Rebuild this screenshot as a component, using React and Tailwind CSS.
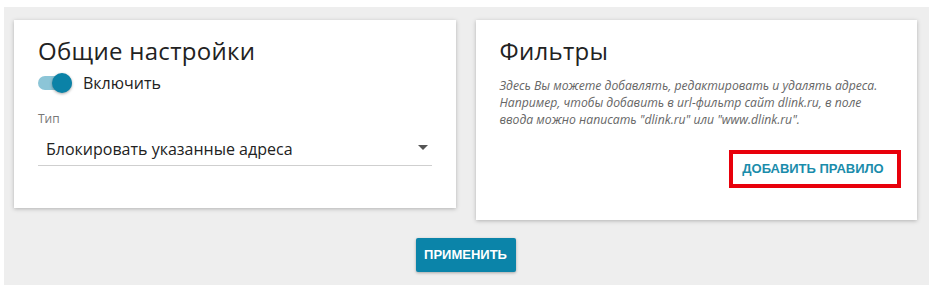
import { useState } from "react";

const App = () => {
  const [enabled, setEnabled] = useState(true);

  return (
    <div className="w-[934px] h-[292px] bg-white pt-[7px] pl-[4px] pr-[5px] pb-[7px] font-['Open_Sans',sans-serif]">
      <div className="h-full bg-[#eeeeee] pt-[13px] pl-[10px] pr-[12px]">
        <div className="flex items-start gap-5">
          {/* Общие настройки */}
          <div className="w-[442px] h-[188px] bg-white shadow-[0_1px_4px_rgba(0,0,0,0.25)] px-6 pt-[15px]">
            <h2 className="text-[24px] leading-[32px] text-[#222] tracking-[0.3px]">Общие настройки</h2>
            <div className="flex items-center mt-[4px] h-[24px]">
              <button
                onClick={() => setEnabled(!enabled)}
                className="relative w-[34px] h-[14px] rounded-full bg-[#8cc5d7]"
              >
                <span className="absolute top-[-3px] left-[14px] w-[20px] h-[20px] rounded-full bg-[#0b82a7] shadow-[0_1px_3px_rgba(0,0,0,0.35)]" />
              </button>
              <span className="ml-[11px] text-[16px] text-[#222]">Включить</span>
            </div>
            <div className="mt-[16px] text-[12px] leading-[16px] text-[#777]">Тип</div>
            <div className="flex items-center justify-between mt-[5px] h-[34px] border-b border-[#cfcfcf] pl-[8px] pr-[4px]">
              <span className="text-[16px] text-[#222]">Блокировать указанные адреса</span>
              <svg width="10" height="5" viewBox="0 0 10 5" className="mb-[2px]">
                <path d="M0 0 L10 0 L5 5 Z" fill="#555" />
              </svg>
            </div>
          </div>

          {/* Фильтры */}
          <div className="w-[442px] h-[200px] bg-white shadow-[0_1px_4px_rgba(0,0,0,0.25)] px-6 pt-[15px] flex flex-col">
            <h2 className="text-[24px] leading-[32px] text-[#222] tracking-[0.3px]">Фильтры</h2>
            <p className="mt-[10px] text-[12.2px] leading-[17px] italic text-[#666]">
              Здесь Вы можете добавлять, редактировать и удалять адреса.
              <br />
              Например, чтобы добавить в url-фильтр сайт dlink.ru, в поле
              <br />
              ввода можно написать "dlink.ru" или "www.dlink.ru".
            </p>
            <div className="flex justify-end mt-[22px] -mr-[8px]">
              <button className="w-[172px] h-[38px] border-4 border-[#e8000b] font-['Liberation_Sans',sans-serif] font-bold text-[13px] text-[#1a8cab] pr-[4px]">
                ДОБАВИТЬ ПРАВИЛО
              </button>
            </div>
          </div>
        </div>

        <div className="flex justify-center mt-[18px]">
          <button className="w-[100px] h-[34px] rounded-[2px] bg-[#0b84a9] shadow-[0_1px_3px_rgba(0,0,0,0.3)] font-['Liberation_Sans',sans-serif] font-bold text-[13px] text-white">
            ПРИМЕНИТЬ
          </button>
        </div>
      </div>
    </div>
  );
};

export default App;
